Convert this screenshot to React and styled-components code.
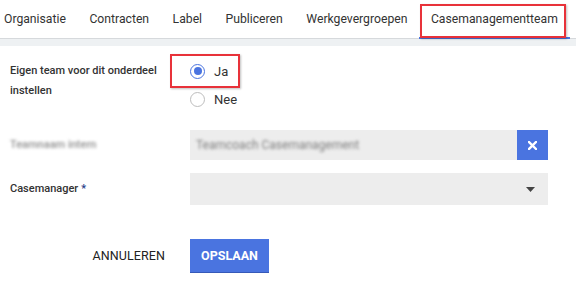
import React from "react";
import styled, { createGlobalStyle } from "styled-components";

const Global = createGlobalStyle`
  html, body { margin: 0; padding: 0; background: #fff; }
  body { font-family: Roboto, "Liberation Sans", Arial, sans-serif; color: #333; }
`;

const Page = styled.div`
  width: 576px;
  height: 286px;
  overflow: hidden;
  background: #fff;
`;

const TabBar = styled.div`
  display: flex;
  height: 39px;
  padding-left: 4px;
  gap: 23.5px;
  border-bottom: 1px solid #d6d9dc;
  box-sizing: border-box;
`;

const Tab = styled.div`
  position: relative;
  display: flex;
  align-items: center;
  font-size: 12.2px;
  color: #333;
  white-space: nowrap;
  padding: 0 ${(p) => (p.$active ? "12px" : "0")};
  margin-left: ${(p) => (p.$active ? "-12px" : "0")};
  &::after {
    content: "";
    position: absolute;
    left: 0;
    right: 0;
    bottom: -1px;
    height: 2px;
    background: ${(p) => (p.$active ? "#4a74e0" : "transparent")};
  }
`;

const RedBox = styled.div`
  position: absolute;
  border: 2px solid #e8323a;
  box-shadow: 1px 1px 2px rgba(0, 0, 0, 0.25);
  pointer-events: none;
  z-index: 2;
`;

const Strip = styled.div`
  height: 7px;
  background: #eef1f3;
`;

const Form = styled.div`
  display: grid;
  grid-template-columns: 180px 358px;
  padding: 11px 0 0 10px;
`;

const Label = styled.div`
  font-size: 11px;
  font-weight: 500;
  line-height: 20px;
  color: #333;
  padding-top: ${(p) => p.$pt || 0}px;
  margin-top: ${(p) => p.$mt || 0}px;
  display: flex;
  align-items: ${(p) => (p.$center ? "center" : "flex-start")};
`;

const Required = styled.span`
  color: #1f3c88;
  margin-left: 3px;
  font-size: 11px;
`;

const RadioGroup = styled.div`
  display: flex;
  flex-direction: column;
`;

const RadioRow = styled.div`
  position: relative;
  display: flex;
  align-items: center;
  height: 28px;
  gap: 9px;
  font-size: 13px;
  color: #333;
`;

const RadioCircle = styled.span`
  box-sizing: border-box;
  width: 15px;
  height: 15px;
  border-radius: 50%;
  border: 1.5px solid ${(p) => (p.$checked ? "#4a74e0" : "#bdbdbd")};
  display: flex;
  align-items: center;
  justify-content: center;
  &::after {
    content: "";
    width: 8px;
    height: 8px;
    border-radius: 50%;
    background: ${(p) => (p.$checked ? "#4a74e0" : "transparent")};
  }
`;

const InputWrap = styled.div`
  display: flex;
  height: ${(p) => p.$h || 30}px;
  margin-top: ${(p) => p.$mt || 0}px;
  background: #ededed;
`;

const InputText = styled.div`
  flex: 1;
  display: flex;
  align-items: center;
  padding-left: 6px;
  font-size: 12px;
  color: #8a8a8a;
`;

const Blurred = styled.span`
  filter: blur(1.4px);
  color: ${(p) => p.$color || "#888"};
  font-size: ${(p) => p.$size || 12}px;
  font-weight: ${(p) => p.$weight || 400};
`;

const ClearButton = styled.button`
  width: 31px;
  border: none;
  background: #4a74e0;
  display: flex;
  align-items: center;
  justify-content: center;
  padding: 0;
`;

const Arrow = styled.div`
  width: 35px;
  display: flex;
  align-items: center;
  justify-content: center;
`;

const Footer = styled.div`
  display: grid;
  grid-template-columns: 180px 358px;
  padding-left: 10px;
  margin-top: 34px;
`;

const CancelButton = styled.div`
  justify-self: end;
  margin-right: 25px;
  display: flex;
  align-items: center;
  font-size: 12.5px;
  color: #222;
  letter-spacing: 0.1px;
`;

const SaveButton = styled.div`
  width: 79px;
  height: 33px;
  background: #4a74e0;
  box-shadow: 0 1px 0 #3659b8;
  color: #fff;
  font-weight: 700;
  font-size: 12.5px;
  display: flex;
  align-items: center;
  justify-content: center;
  box-sizing: border-box;
`;

export default function App() {
  return (
    <Page>
      <Global />
      <TabBar>
        <Tab>Organisatie</Tab>
        <Tab>Contracten</Tab>
        <Tab>Label</Tab>
        <Tab>Publiceren</Tab>
        <Tab>Werkgevergroepen</Tab>
        <Tab $active>
          Casemanagementteam
          <RedBox style={{ left: 1, right: 4, top: 4, bottom: 0 }} />
        </Tab>
      </TabBar>
      <Strip />
      <Form>
        <Label $pt={4}>
          Eigen team voor dit onderdeel
          <br />
          instellen
        </Label>
        <RadioGroup>
          <RadioRow>
            <RadioCircle $checked />
            Ja
            <RedBox style={{ left: -20, width: 66, top: -3, height: 30 }} />
          </RadioRow>
          <RadioRow>
            <RadioCircle />
            Nee
          </RadioRow>
        </RadioGroup>

        <Label $mt={17} $center style={{ height: 30 }}>
          <Blurred $color="#8f8f8f" $weight={500} $size={11}>
            Teamnaam intern
          </Blurred>
        </Label>
        <InputWrap $mt={17} $h={30}>
          <InputText>
            <Blurred $color="#7f7f7f">Teamcoach Casemanagement</Blurred>
          </InputText>
          <ClearButton>
            <svg width="9" height="9" viewBox="0 0 9 9">
              <path d="M1 1L8 8M8 1L1 8" stroke="#fff" strokeWidth="2.4" strokeLinecap="square" />
            </svg>
          </ClearButton>
        </InputWrap>

        <Label $mt={13} $center style={{ height: 32 }}>
          Casemanager<Required>*</Required>
        </Label>
        <InputWrap $mt={13} $h={32}>
          <InputText />
          <Arrow>
            <svg width="9" height="5" viewBox="0 0 9 5">
              <path d="M0 0H9L4.5 5Z" fill="#444" />
            </svg>
          </Arrow>
        </InputWrap>
      </Form>
      <Footer>
        <CancelButton>ANNULEREN</CancelButton>
        <SaveButton>OPSLAAN</SaveButton>
      </Footer>
    </Page>
  );
}
